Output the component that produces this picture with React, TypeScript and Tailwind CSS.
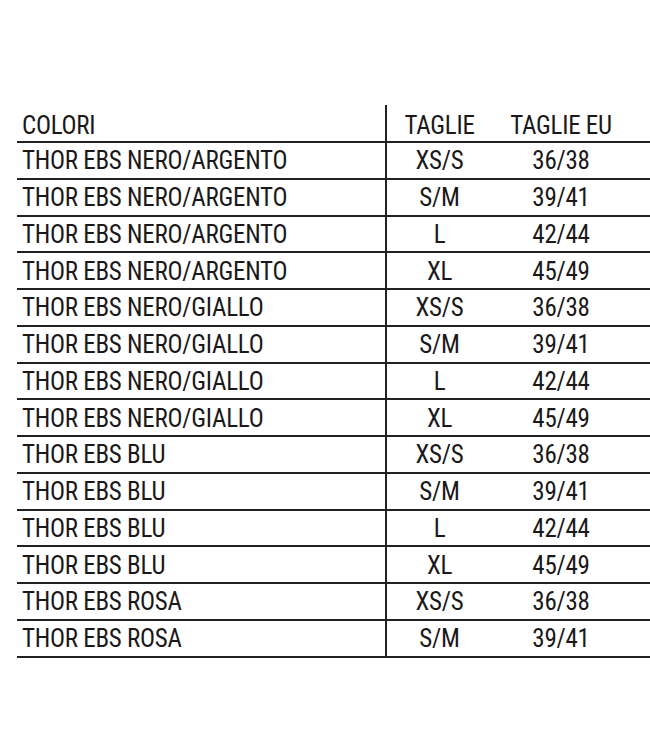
const sizes: [string, string][] = [
  ["XS/S", "36/38"],
  ["S/M", "39/41"],
  ["L", "42/44"],
  ["XL", "45/49"],
];

const colors = [
  "THOR EBS NERO/ARGENTO",
  "THOR EBS NERO/GIALLO",
  "THOR EBS BLU",
];

const rows: [string, string, string][] = [
  ...colors.flatMap((c) => sizes.map(([s, eu]) => [c, s, eu] as [string, string, string])),
  ["THOR EBS ROSA", "XS/S", "36/38"],
  ["THOR EBS ROSA", "S/M", "39/41"],
];

export default function App() {
  return (
    <div className="min-h-[750px] w-[650px] bg-white pt-[105px] font-['Roboto',sans-serif] text-[25px] leading-none font-stretch-condensed tracking-[-0.25px] text-[#1a1819]">
      <div className="ml-[17px] w-[633px]">
        <div className="flex h-[38px] border-b-[2.5px] border-[#222]">
          <div className="flex w-[370px] items-center border-r-2 border-[#222] pt-[5px] pl-[5px]">COLORI</div>
          <div className="flex w-[105px] items-center justify-center pt-[5px]">TAGLIE</div>
          <div className="flex w-[138px] items-center justify-center pt-[5px]">TAGLIE EU</div>
        </div>
        {rows.map(([c, s, eu], i) => (
          <div key={i} className="flex h-[36.76px] border-b-[2.5px] border-[#222]">
            <div className="flex w-[370px] items-center border-r-2 border-[#222] pt-[1px] pl-[5px]">{c}</div>
            <div className="flex w-[105px] items-center justify-center pt-[1px]">{s}</div>
            <div className="flex w-[138px] items-center justify-center pt-[1px]">{eu}</div>
          </div>
        ))}
      </div>
    </div>
  );
}
